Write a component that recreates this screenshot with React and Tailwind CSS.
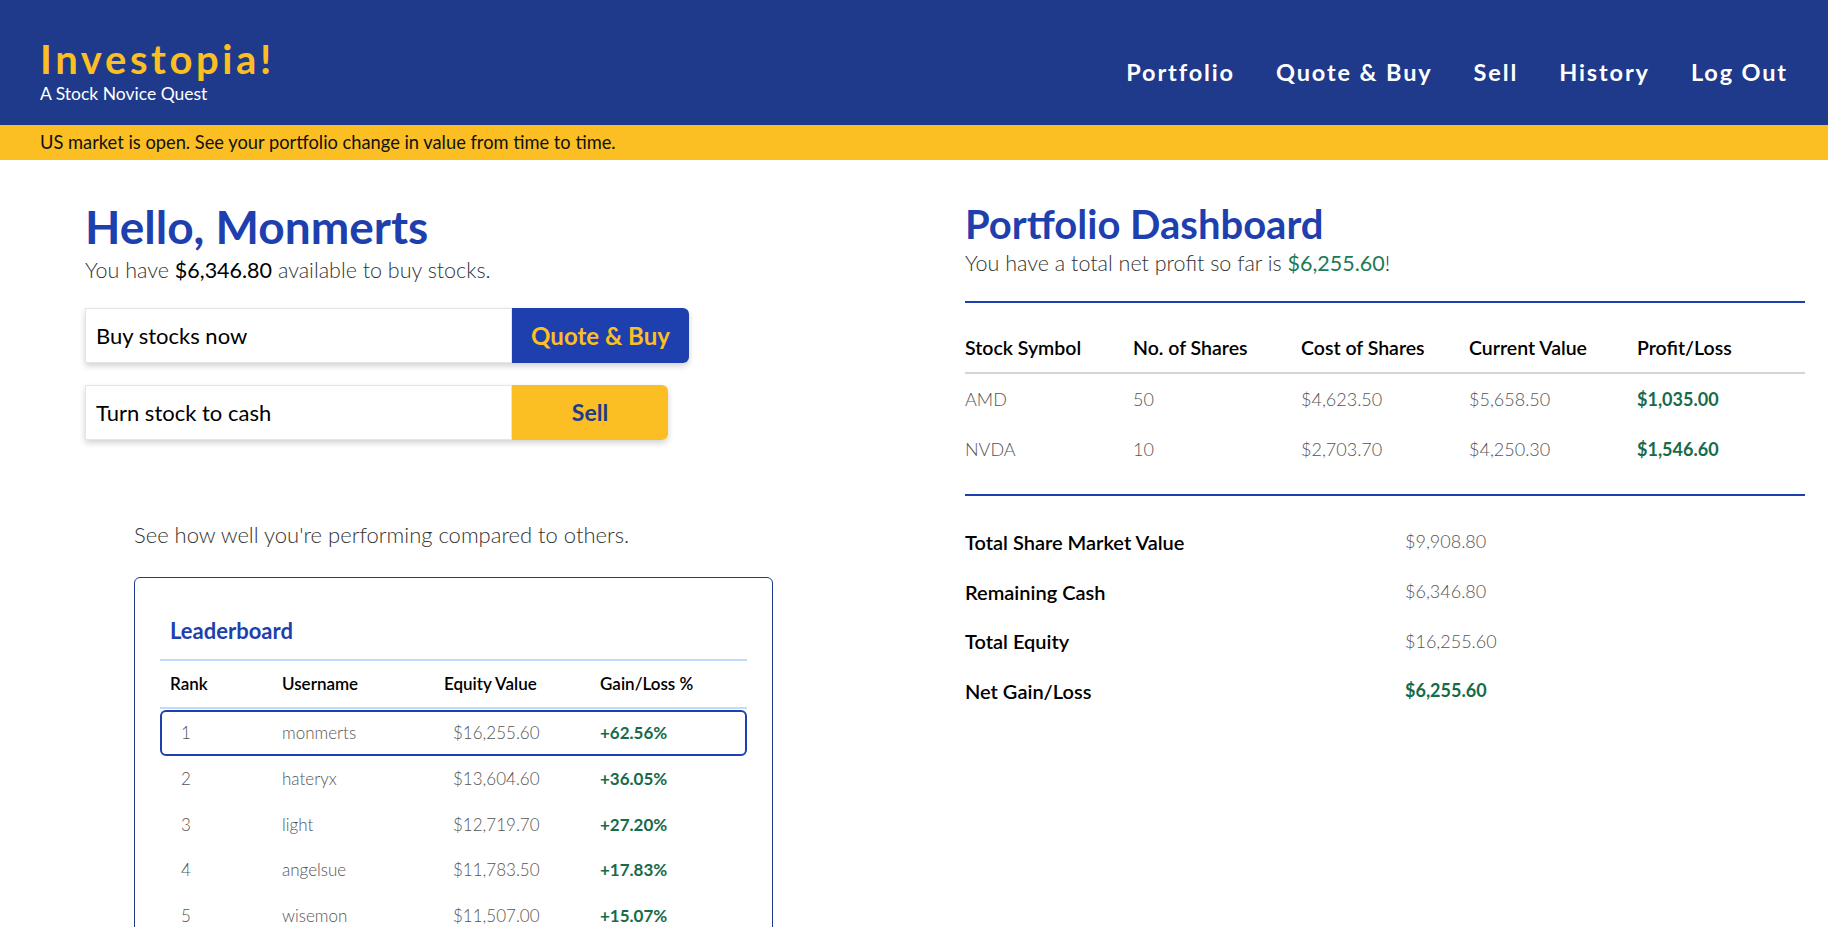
import React from "react";

const F = { fontFamily: '"Lato", "Open Sans", sans-serif' };

const holdings = [
  { sym: "AMD", n: "50", cost: "$4,623.50", cur: "$5,658.50", pl: "$1,035.00" },
  { sym: "NVDA", n: "10", cost: "$2,703.70", cur: "$4,250.30", pl: "$1,546.60" },
];

const leaders = [
  { r: "1", u: "monmerts", e: "$16,255.60", g: "+62.56%" },
  { r: "2", u: "hateryx", e: "$13,604.60", g: "+36.05%" },
  { r: "3", u: "light", e: "$12,719.70", g: "+27.20%" },
  { r: "4", u: "angelsue", e: "$11,783.50", g: "+17.83%" },
  { r: "5", u: "wisemon", e: "$11,507.00", g: "+15.07%" },
];

export default function App() {
  return (
    <div className="min-h-[927px] bg-white text-black" style={F}>
      <header className="h-[125px] bg-[#1f3a8a] flex items-center justify-between px-[40px]">
        <div className="flex flex-col pt-[16px]">
          <div className="text-[40px] leading-[44px] font-bold tracking-[0.09em] text-[#fbbf24]">Investopia!</div>
          <div className="text-[17.5px] leading-[22px] text-white mt-[2px]">A Stock Novice Quest</div>
        </div>
        <nav className="flex items-center gap-[41px] text-[23.5px] font-bold tracking-[0.08em] text-white pt-[20px]">
          <span>Portfolio</span>
          <span>Quote &amp; Buy</span>
          <span>Sell</span>
          <span>History</span>
          <span>Log Out</span>
        </nav>
      </header>
      <div className="h-[35px] bg-[#fbbf24] flex items-center px-[40px] text-[18.3px] text-[#111]">
        US market is open. See your portfolio change in value from time to time.
      </div>

      <main className="flex pl-[85px]">
        <section className="w-[880px] shrink-0 pt-[41px]">
          <h1 className="text-[46px] leading-[52px] font-bold text-[#1e40af]">Hello, Monmerts</h1>
          <p className="text-[21.5px] leading-[28px] font-light text-[#333] mt-[3px]">
            You have <span className="font-normal text-black">$6,346.80</span> available to buy stocks.
          </p>

          <div className="mt-[24px] flex flex-col gap-[22px]">
            <div className="flex h-[55px] shadow-[0_3px_6px_rgba(0,0,0,0.18)] w-fit rounded-r-[6px]">
              <div className="w-[427px] border border-[#e5e5e5] flex items-center pl-[10px] text-[22px] bg-white">Buy stocks now</div>
              <button className="w-[177px] bg-[#1e40af] text-[#fbbf24] text-[24px] font-bold rounded-r-[6px]">Quote &amp; Buy</button>
            </div>
            <div className="flex h-[55px] shadow-[0_3px_6px_rgba(0,0,0,0.18)] w-fit rounded-r-[6px]">
              <div className="w-[427px] border border-[#e5e5e5] flex items-center pl-[10px] text-[22px] bg-white">Turn stock to cash</div>
              <button className="w-[156px] bg-[#fbbf24] text-[#1e3a8a] text-[23px] font-bold rounded-r-[6px]">Sell</button>
            </div>
          </div>

          <div className="ml-[49px] mt-[81px]">
            <p className="text-[22px] leading-[28px] font-light text-[#333]">See how well you're performing compared to others.</p>
            <div className="mt-[28px] w-[639px] border border-[#1e3a8a] rounded-[6px] px-[25px] pt-[39px] pb-[20px]">
              <h2 className="text-[22px] leading-[28px] font-bold text-[#1e40af] pl-[10px]">Leaderboard</h2>
              <div className="mt-[14px] h-[2px] bg-[#bfdbfe]" />
              <div className="flex items-center h-[46px] text-[17px] font-semibold text-black">
                <span className="w-[122px] pl-[10px]">Rank</span>
                <span className="w-[162px]">Username</span>
                <span className="w-[156px]">Equity Value</span>
                <span>Gain/Loss %</span>
              </div>
              <div className="h-[2px] bg-[#bfdbfe]" />
              <div className="mt-[1px] flex flex-col gap-[0.5px]">
                {leaders.map((l, i) => (
                  <div
                    key={l.r}
                    className={
                      "flex items-center text-[17px] " +
                      (i === 0 ? "h-[46px] border-2 border-[#1e40af] rounded-[6px]" : "h-[45px] border-2 border-transparent")
                    }
                  >
                    <span className="w-[120px] pl-[19px] font-light text-[#555]">{l.r}</span>
                    <span className="w-[171px] font-light text-[#555]">{l.u}</span>
                    <span className="w-[147px] font-light text-[#555]">{l.e}</span>
                    <span className="font-bold text-[#166b4a]">{l.g}</span>
                  </div>
                ))}
              </div>
            </div>
          </div>
        </section>

        <section className="w-[840px] shrink-0 pt-[41px]">
          <h1 className="text-[40px] leading-[46px] font-bold text-[#1e40af]">Portfolio Dashboard</h1>
          <p className="text-[21.5px] leading-[28px] font-light text-[#333] mt-[2px]">
            You have a total net profit so far is <span className="font-normal text-[#217a55]">$6,255.60</span>!
          </p>
          <div className="mt-[24px] h-[2px] bg-[#1e40af]" />

          <div className="mt-[21px]">
            <div className="flex items-center h-[48px] text-[19.5px] font-semibold text-black">
              <span className="w-[168px]">Stock Symbol</span>
              <span className="w-[168px]">No. of Shares</span>
              <span className="w-[168px]">Cost of Shares</span>
              <span className="w-[168px]">Current Value</span>
              <span className="w-[168px]">Profit/Loss</span>
            </div>
            <div className="h-[2px] bg-[#d4d4d4]" />
            {holdings.map((h) => (
              <div key={h.sym} className="flex items-center h-[50px] text-[18px]">
                <span className="w-[168px] font-light text-[#555]">{h.sym}</span>
                <span className="w-[168px] font-light text-[#555]">{h.n}</span>
                <span className="w-[168px] font-light text-[#555]">{h.cost}</span>
                <span className="w-[168px] font-light text-[#555]">{h.cur}</span>
                <span className="w-[168px] font-bold text-[#166b4a]">{h.pl}</span>
              </div>
            ))}
          </div>
          <div className="mt-[20px] h-[2px] bg-[#1e40af]" />

          <div className="mt-[21px] flex flex-col">
            {[
              ["Total Share Market Value", "$9,908.80", false],
              ["Remaining Cash", "$6,346.80", false],
              ["Total Equity", "$16,255.60", false],
              ["Net Gain/Loss", "$6,255.60", true],
            ].map(([k, v, g]) => (
              <div key={k} className="flex items-center h-[49.7px] text-[18px]">
                <span className="w-[440px] text-[20px] font-semibold text-black">{k}</span>
                <span className={g ? "font-bold text-[#166b4a]" : "font-light text-[#555]"}>{v}</span>
              </div>
            ))}
          </div>
        </section>
      </main>
    </div>
  );
}
